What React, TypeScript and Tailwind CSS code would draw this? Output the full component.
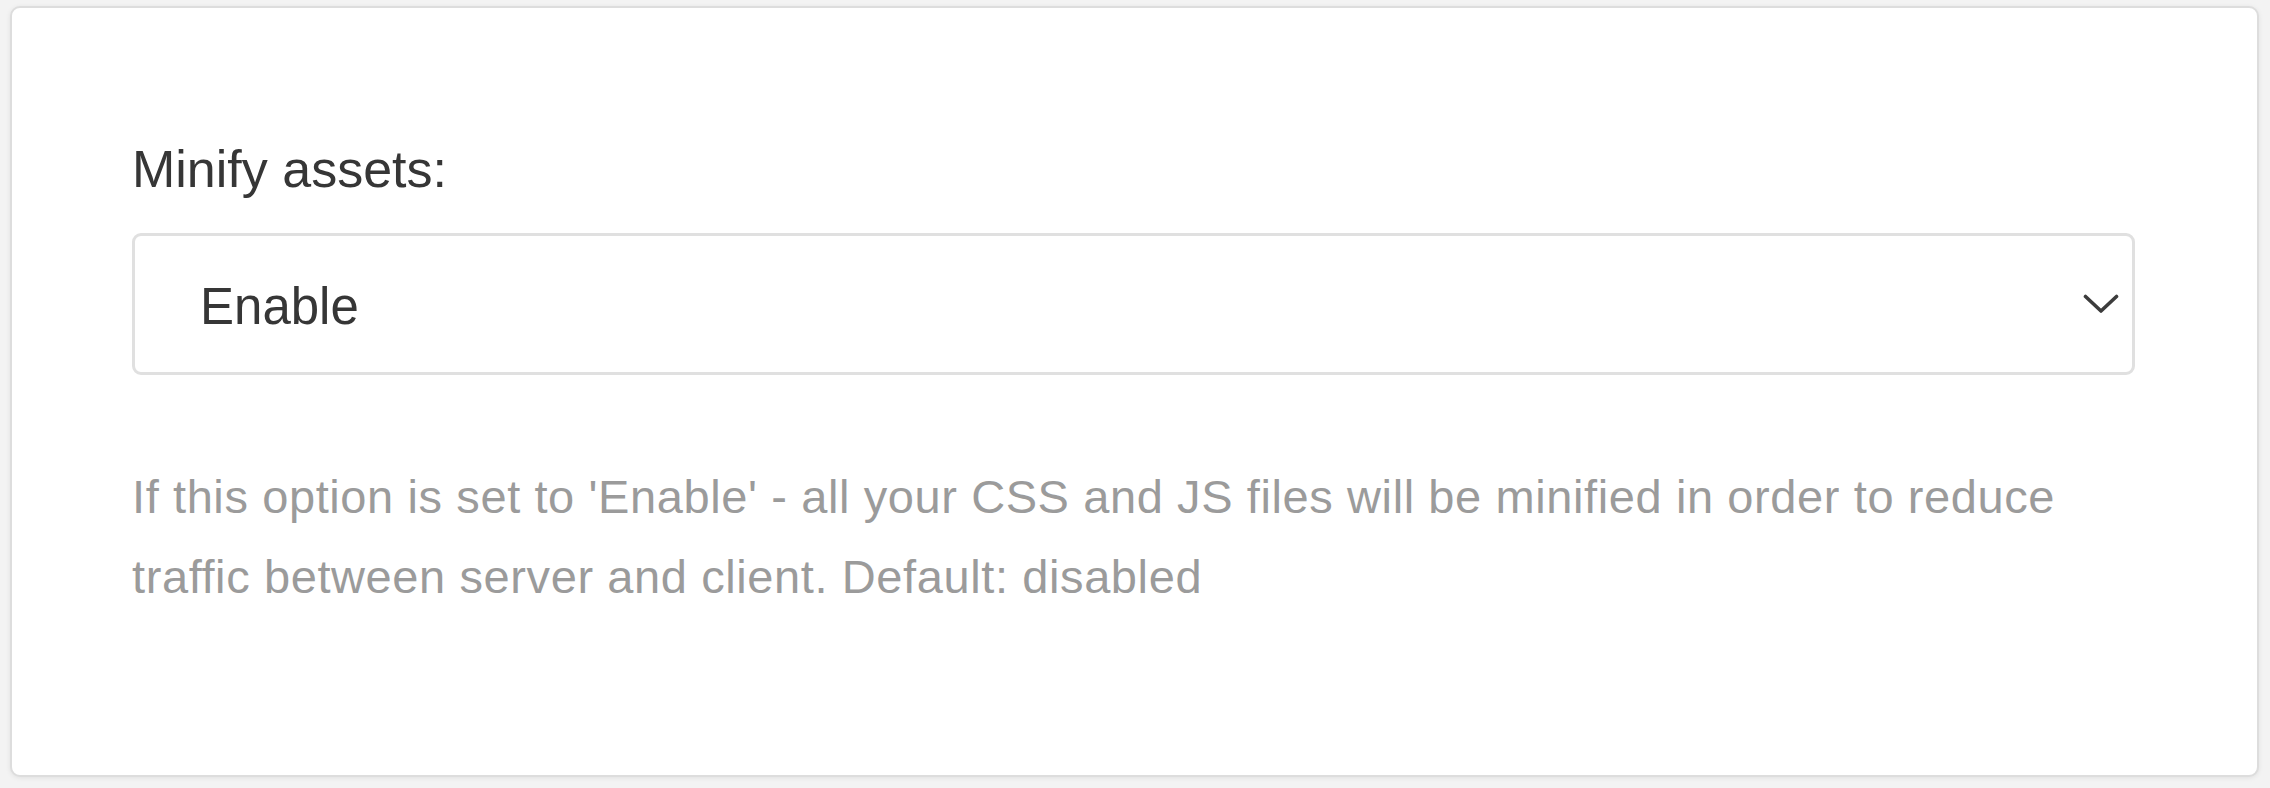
import React from "react";

function Chevron() {
  return (
    <svg width="36" height="22" viewBox="0 0 36 22" fill="none">
      <path d="M2.5 3.5 L18 18 L33.5 3.5" stroke="#3c3c3c" strokeWidth="3.6" strokeLinecap="round" strokeLinejoin="round" />
    </svg>
  );
}

export default function App() {
  return (
    <div className="min-h-[788px] w-[2270px] bg-[#f3f3f3] pt-[6px] pl-[10px]" style={{ fontFamily: "'Liberation Sans', Arial, sans-serif" }}>
      <div className="w-[2249px] rounded-[10px] border-2 border-[#dddddd] bg-white pt-[131px] pb-[158px] pl-[120px] pr-[122px] shadow-[0_1px_5px_rgba(0,0,0,0.08)]">
        <label className="block text-[52px] leading-[60px] text-[#363636]">Minify assets:</label>

        <div className="mt-[34px] flex h-[142px] items-center justify-between rounded-[9px] border-[3px] border-[#e0e0e0] pl-[65px] pr-[13px]">
          <span className="pt-[5px] text-[51px] leading-[60px] text-[#363636]">Enable</span>
          <Chevron />
        </div>

        <p className="mt-[82px] text-[47px] leading-[80px] tracking-[0.6px] text-[#9b9b9b]">
          If this option is set to 'Enable' - all your CSS and JS files will be minified in order to reduce traffic between server and client. Default: disabled
        </p>
      </div>
    </div>
  );
}
